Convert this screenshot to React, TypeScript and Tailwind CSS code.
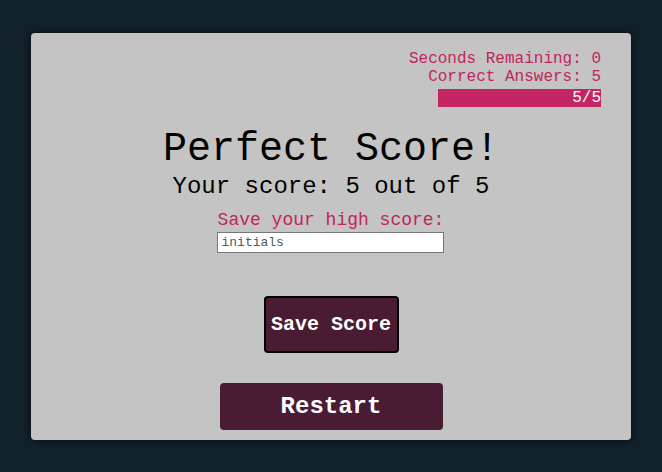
import React from 'react';

export default function App() {
  const seconds = 0;
  const correct = 5;
  const total = 5;

  return (
    <div className="min-h-screen w-full bg-[#12222b] pt-[33px] font-['Liberation_Mono',monospace]">
      <div className="mx-auto w-[600px] h-[407px] rounded bg-[#c4c4c4] shadow-[0_0_10px_rgba(0,0,0,0.7)] px-[30px] pt-[17px] flex flex-col overflow-hidden">
        <div className="flex flex-col items-end text-[16px] leading-[18px] text-[#c2255c]">
          <p>Seconds Remaining: {seconds}</p>
          <p>Correct Answers: {correct}</p>
          <div className="mt-[3px] w-[163px] h-[18px] bg-[#c42563] text-white text-right">
            {correct}/{total}
          </div>
        </div>
        <div className="flex flex-col items-center">
          <h1 className="mt-[20px] text-[40px] leading-[46px]">Perfect Score!</h1>
          <h2 className="text-[24px] leading-[28px]">Your score: {correct} out of {total}</h2>
          <label className="mt-[8px] text-[18px] leading-[22px] text-[#c2255c]">Save your high score:</label>
          <input
            type="text"
            placeholder="initials"
            className="mt-[1px] -ml-[2px] w-[227px] h-[21px] bg-white border border-[#767676] px-1 text-[13px] placeholder:text-[#555]"
          />
          <button className="mt-[43px] w-[135px] h-[57px] rounded border-2 border-black bg-[#4a1c34] text-white text-[20px] font-bold">
            Save Score
          </button>
          <button className="mt-[30px] w-[223px] h-[47px] rounded bg-[#4a1c34] text-white text-[24px] font-bold">
            Restart
          </button>
        </div>
      </div>
    </div>
  );
}
